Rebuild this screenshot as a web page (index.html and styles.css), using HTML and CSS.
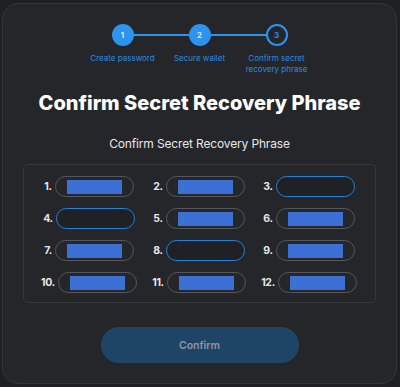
FILE: index.html
```html
<!DOCTYPE html>
<html lang="en">
<head>
<meta charset="utf-8">
<title>Confirm Secret Recovery Phrase</title>
<link rel="stylesheet" href="styles.css">
</head>
<body>
<div class="card">
  <ol class="stepper">
    <li class="step done"><span class="dot">1</span><span class="step-label">Create password</span></li>
    <li class="step done"><span class="dot">2</span><span class="step-label">Secure wallet</span></li>
    <li class="step current"><span class="dot">3</span><span class="step-label">Confirm secret<br>recovery phrase</span></li>
  </ol>
  <h1 class="title">Confirm Secret Recovery Phrase</h1>
  <h2 class="subtitle">Confirm Secret Recovery Phrase</h2>
  <div class="phrase-box">
    <div class="cell"><span class="num">1.</span><span class="pill"><span class="word"></span></span></div>
    <div class="cell"><span class="num">2.</span><span class="pill"><span class="word"></span></span></div>
    <div class="cell"><span class="num">3.</span><span class="pill empty"></span></div>
    <div class="cell"><span class="num">4.</span><span class="pill empty"></span></div>
    <div class="cell"><span class="num">5.</span><span class="pill"><span class="word"></span></span></div>
    <div class="cell"><span class="num">6.</span><span class="pill"><span class="word"></span></span></div>
    <div class="cell"><span class="num">7.</span><span class="pill"><span class="word"></span></span></div>
    <div class="cell"><span class="num">8.</span><span class="pill empty"></span></div>
    <div class="cell"><span class="num">9.</span><span class="pill"><span class="word"></span></span></div>
    <div class="cell"><span class="num">10.</span><span class="pill"><span class="word"></span></span></div>
    <div class="cell"><span class="num">11.</span><span class="pill"><span class="word"></span></span></div>
    <div class="cell"><span class="num">12.</span><span class="pill"><span class="word"></span></span></div>
  </div>
  <div class="actions"><button class="confirm" disabled>Confirm</button></div>
</div>
</body>
</html>
```

FILE: styles.css
```css
* { box-sizing: border-box; }
html, body { margin: 0; padding: 0; }
body {
  background: #1f2023;
  font-family: Inter, "Noto Sans", sans-serif;
  width: 400px;
  height: 387px;
  overflow: hidden;
}
.card {
  margin: 3px 3px 3px 2px;
  height: 381px;
  border: 1px solid #333539;
  border-radius: 16px;
  background: #242629;
  padding-top: 20px;
}
.stepper {
  list-style: none;
  margin: 0;
  padding: 0;
  display: grid;
  grid-template-columns: repeat(3, 77px);
  justify-content: center;
}
.step {
  position: relative;
  display: flex;
  flex-direction: column;
  align-items: center;
}
.step + .step::before {
  content: "";
  position: absolute;
  top: 10px;
  right: 50%;
  width: 77px;
  height: 2px;
  background: #2d93ef;
  z-index: 0;
}
.dot {
  position: relative;
  z-index: 1;
  width: 22px;
  height: 22px;
  border-radius: 50%;
  background: #2d93ef;
  color: #e8f2fc;
  font-size: 8px;
  font-weight: 600;
  display: flex;
  align-items: center;
  justify-content: center;
}
.current .dot {
  background: #242629;
  border: 2px solid #2d93ef;
  color: #2d93ef;
}
.step-label {
  margin-top: 7px;
  font-size: 8px;
  line-height: 11px;
  color: #2a8be0;
  text-align: center;
  white-space: nowrap;
}
.title {
  margin: 15px 0 0;
  font-size: 20px;
  line-height: 26px;
  font-weight: 800;
  color: #ffffff;
  text-align: center;
  letter-spacing: 0;
}
.subtitle {
  margin: 20px 0 0;
  font-size: 12px;
  line-height: 16px;
  font-weight: 400;
  color: #e6e7e9;
  text-align: center;
  letter-spacing: -0.15px;
}
.phrase-box {
  margin: 12px 20px 0;
  border: 1px solid #35373b;
  border-radius: 5px;
  padding: 11px 11px 9px 10px;
  display: grid;
  grid-template-columns: repeat(3, 1fr);
  row-gap: 11px;
}
.cell {
  display: flex;
  align-items: center;
  justify-content: center;
  gap: 3px;
}
.num {
  font-size: 10.5px;
  font-weight: 700;
  color: #e6e7e9;
  letter-spacing: -0.3px;
}
.pill {
  width: 79px;
  height: 21px;
  border: 1px solid #55585c;
  border-radius: 11px;
  display: flex;
  align-items: center;
  justify-content: center;
}
.pill.empty {
  border: 1.5px solid #1e84dc;
  background: #1f2124;
}
.word {
  width: 55px;
  height: 14px;
  background: #3c70d5;
}
.actions {
  display: flex;
  justify-content: center;
  margin-top: 24px;
}
.confirm {
  width: 198px;
  height: 36px;
  border: 0;
  border-radius: 18px;
  background: #1f4566;
  color: #8e97a1;
  font-family: inherit;
  font-size: 10.5px;
  font-weight: 600;
}
```
